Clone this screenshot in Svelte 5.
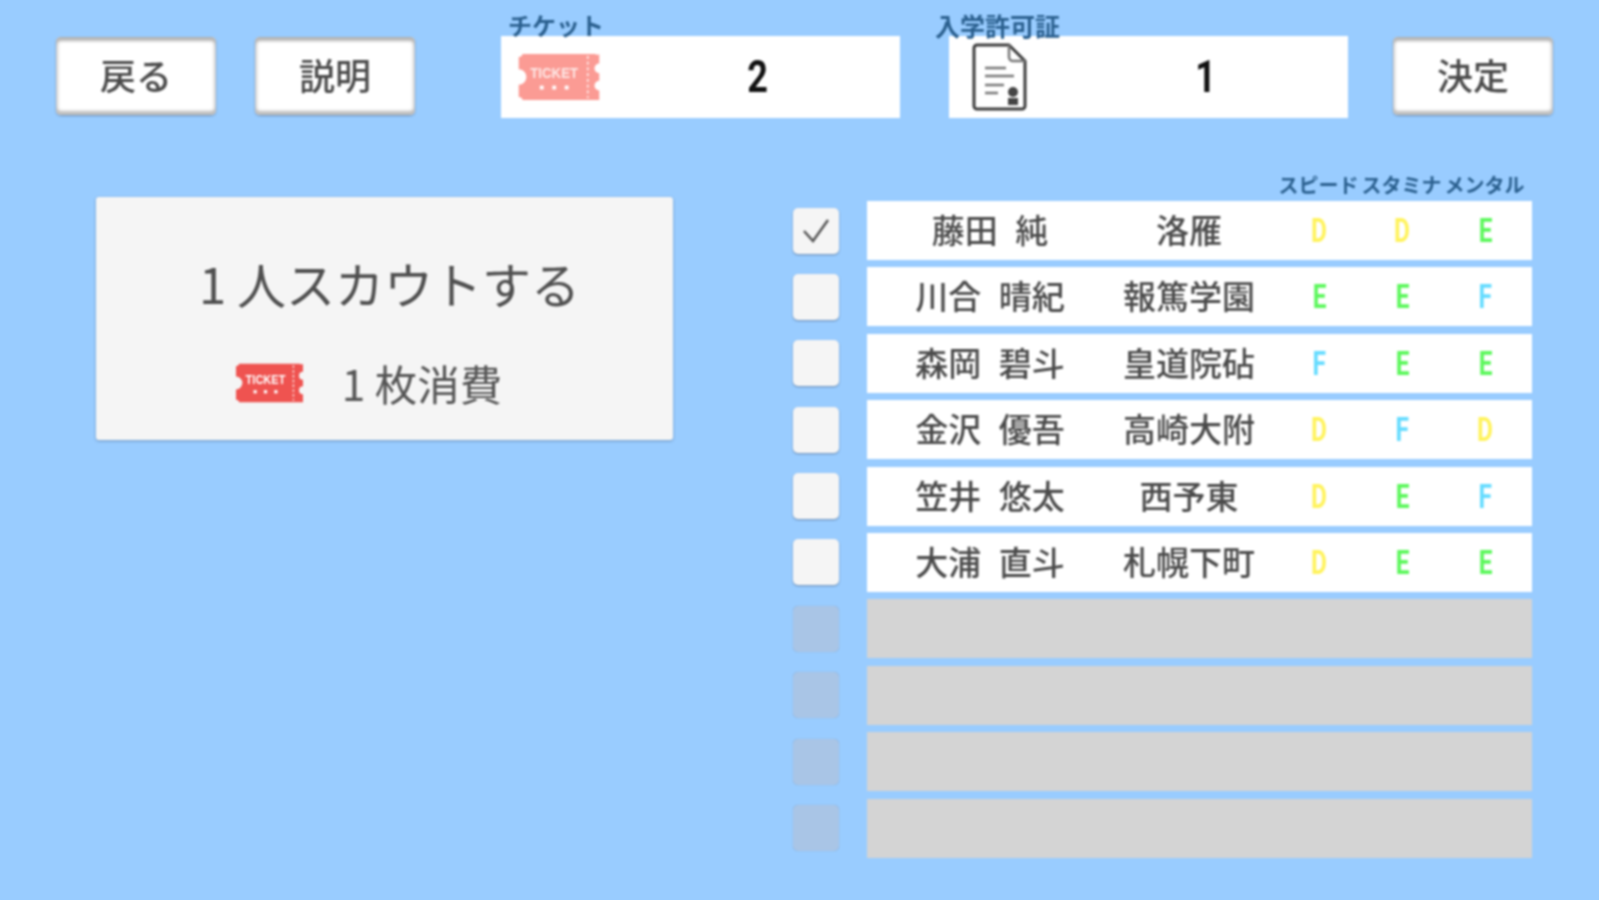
<script>
  const players = [
    { name: '藤田 純', school: '洛雁', grades: ['D', 'D', 'E'], checked: true },
    { name: '川合 晴紀', school: '報篤学園', grades: ['E', 'E', 'F'] },
    { name: '森岡 碧斗', school: '皇道院砧', grades: ['F', 'E', 'E'] },
    { name: '金沢 優吾', school: '高崎大附', grades: ['D', 'F', 'D'] },
    { name: '笠井 悠太', school: '西予東', grades: ['D', 'E', 'F'] },
    { name: '大浦 直斗', school: '札幌下町', grades: ['D', 'E', 'E'] }
  ];
  const empties = [0, 1, 2, 3];
</script>

{#snippet ticket(cls)}
  <svg class={cls} viewBox="0 0 84 48" aria-hidden="true">
    <path class="tk-body" d="M4 0H80a3 3 0 0 0 4 0V10a5 5 0 0 0 0 10V28a5 5 0 0 0 0 10V48H4a4 4 0 0 0-4-3V32a8 8 0 0 0 0-16V3a4 4 0 0 0 4-3Z" />
    <text x="37" y="25" text-anchor="middle" class="tk-text" textLength="50" lengthAdjust="spacingAndGlyphs">TICKET</text>
    <rect x="22" y="33" width="4" height="4" class="tk-dot" />
    <rect x="35" y="33" width="4" height="4" class="tk-dot" />
    <rect x="48" y="33" width="4" height="4" class="tk-dot" />
    <path d="M72 2V46" class="tk-perf" />
  </svg>
{/snippet}

<div class="page">
  <header class="top">
    <button class="btn">戻る</button>
    <button class="btn second">説明</button>
    <section class="panel first-panel">
      <span class="panel-label">チケット</span>
      {@render ticket('tk tk-pale')}
      <strong class="count">2</strong>
    </section>
    <section class="panel second-panel">
      <span class="panel-label license">入学許可証</span>
      <svg class="doc" viewBox="0 0 56 68" aria-hidden="true">
        <path d="M5 2H37L53 18V63a3 3 0 0 1-3 3H5a3 3 0 0 1-3-3V5a3 3 0 0 1 3-3Z" class="doc-line" />
        <path d="M37 2V14a4 4 0 0 0 4 4H53" class="doc-line thin" />
        <path d="M13 25H34M13 33H42M13 42H32M13 50H26" class="doc-line thin" />
        <circle cx="41" cy="49" r="5" class="doc-fill" />
        <path d="M36 62V55H46V62Z" class="doc-fill" />
      </svg>
      <strong class="count">1</strong>
    </section>
    <button class="btn last">決定</button>
  </header>

  <main class="content">
    <section class="card">
      <h1>1 人スカウトする</h1>
      <p class="cost">
        {@render ticket('tk tk-strong')}
        <span>1 枚消費</span>
      </p>
    </section>

    <section class="list">
      <div class="heads">
        <span>スピード</span><span>スタミナ</span><span>メンタル</span>
      </div>
      {#each players as p}
        <div class="line">
          <div class="check">
            {#if p.checked}
              <svg viewBox="0 0 32 32" class="tick" aria-hidden="true"><path d="M4 16L13 26L28 5" /></svg>
            {/if}
          </div>
          <div class="row">
            <span class="name">{p.name}</span>
            <span class="school">{p.school}</span>
            {#each p.grades as g}
              <span class="grade g{g}"><i>{g}</i></span>
            {/each}
          </div>
        </div>
      {/each}
      {#each empties as e (e)}
        <div class="line">
          <div class="check off"></div>
          <div class="row off"></div>
        </div>
      {/each}
    </section>
  </main>
</div>

<style>
  :global(body) { margin: 0; background: #99ccff; }
  .page {
    width: 1599px;
    height: 900px;
    overflow: hidden;
    background: #99ccff;
    font-family: "Noto Sans CJK JP", "Noto Sans", sans-serif;
    color: #4a4a4a;
    filter: blur(0.9px);
  }
  .top {
    display: flex;
    align-items: center;
    padding: 36px 0 0 56px;
  }
  .btn {
    width: 160px;
    height: 78px;
    margin-bottom: 2px;
    border: 0;
    border-radius: 5px;
    background: #fff;
    box-shadow: inset 0 6px 3px -2px #b4b4b4, inset 0 -6px 3px -2px #bcbcbc, inset 4px 0 3px -2px #ccc, inset -4px 0 3px -2px #ccc, 0 1px 2px rgba(70,90,120,.5);
    font: inherit;
    font-size: 36px;
    font-weight: 500;
    color: #4a4a4a;
    padding: 0 0 4px;
  }
  .second { margin-left: 39px; }
  .last { margin-left: 45px; }
  .panel {
    position: relative;
    width: 399px;
    height: 82px;
    background: #fff;
    display: flex;
    align-items: center;
  }
  .first-panel { margin-left: 86px; }
  .second-panel { margin-left: 49px; }
  .panel-label {
    position: absolute;
    left: 7px;
    top: -26px;
    font-size: 24px;
    font-weight: 700;
    line-height: 30px;
    color: #2a5f8e;
    white-space: nowrap;
  }
  .license { left: -14px; font-size: 25px; }
  .tk { display: block; }
  .tk-pale { width: 84px; height: 46px; margin-left: 16px; }
  .tk-body { fill: #ef5350; }
  .tk-pale .tk-body { fill: #fb9b94; }
  .tk-text { font-family: "Liberation Sans", sans-serif; font-size: 15px; font-weight: 700; fill: #fff; }
  .tk-pale .tk-text { fill: #fde9e7; }
  .tk-dot { fill: #fff; }
  .tk-perf { stroke: #fff; stroke-width: 1.5; stroke-dasharray: 3 3; fill: none; }
  .doc { width: 56px; height: 68px; margin-left: 23px; flex: none; }
  .doc-line { fill: none; stroke: #3c3c3c; stroke-width: 3; stroke-linejoin: round; }
  .doc-line.thin { stroke: #777; stroke-width: 2.5; }
  .doc-fill { fill: #444; }
  .count {
    font-family: "Roboto", sans-serif;
    font-weight: 700;
    font-size: 44px;
    line-height: 1;
    color: #111;
    transform: scaleX(.82);
    position: absolute;
    left: 244px;
  }
  .content {
    display: flex;
    align-items: flex-start;
    padding: 79px 0 0 96px;
  }
  .card {
    width: 577px;
    height: 243px;
    box-sizing: border-box;
    border-radius: 3px;
    background: #f5f5f5;
    box-shadow: 0 1px 3px rgba(60,80,110,.45);
    display: flex;
    flex-direction: column;
    align-items: center;
    padding-top: 50px;
  }
  h1 {
    margin: 0 0 0 10px;
    font-size: 49px;
    font-weight: 400;
    line-height: 72px;
    white-space: nowrap;
    color: #4f4f4f;
  }
  .cost {
    margin: 35px 0 0 -31px;
    display: flex;
    align-items: center;
    gap: 39px;
    font-size: 42.5px;
    line-height: 58px;
    color: #555;
  }
  .tk-strong { width: 67px; height: 40px; }
  .list { margin-left: 120px; margin-top: -25px; }
  .heads {
    display: grid;
    grid-template-columns: repeat(3, 83px);
    margin-left: 484px;
    height: 29px;
    font-size: 20px;
    font-weight: 700;
    line-height: 25px;
    color: #2a5f8e;
    text-align: center;
    white-space: nowrap;
  }
  .line {
    display: flex;
    align-items: center;
    gap: 27px;
    height: 59px;
    margin-bottom: 7.4px;
  }
  .check {
    width: 46px;
    height: 46px;
    margin-right: 1px;
    border-radius: 5px;
    background: #f5f5f5;
    box-shadow: 0 1px 2px rgba(70,90,120,.6);
    flex: none;
    display: flex;
    align-items: center;
    justify-content: center;
  }
  .check.off { background: #a9c5e6; box-shadow: 0 0 1px rgba(70,90,120,.4); }
  .tick { width: 32px; height: 32px; fill: none; stroke: #555; stroke-width: 2.5; }
  .row {
    width: 665px;
    height: 59px;
    box-sizing: border-box;
    padding-bottom: 5px;
    background: #fff;
    display: grid;
    grid-template-columns: 246px 165px repeat(3, 83px);
    align-items: center;
    font-size: 33px;
    font-weight: 500;
    line-height: 54px;
    color: #4a4a4a;
    text-align: center;
    white-space: nowrap;
  }
  .row.off { background: #d4d4d4; }
  .name { word-spacing: 10px; }
  .school { padding-right: 13px; }
  .grade { font-size: 33px; }
  .grade i {
    display: inline-block;
    font-family: "Roboto", sans-serif;
    font-style: normal;
    font-weight: 700;
    font-size: 34px;
    transform: scaleX(.72);
  }
  .gD i { color: #fff35c; }
  .gE i { color: #5cf75c; }
  .gF i { color: #66dcff; }
</style>
